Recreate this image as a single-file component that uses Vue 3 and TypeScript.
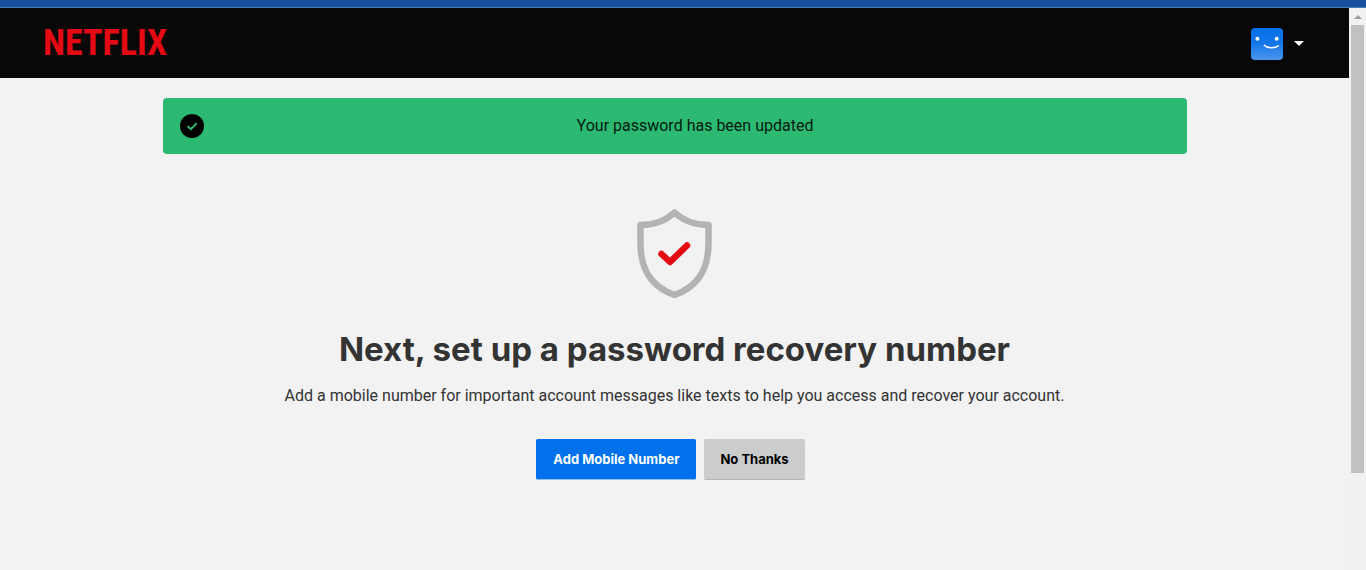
<script setup lang="ts">
import { ref } from 'vue'

const visible = ref(true)
const status: string = 'Your password has been updated'
</script>

<template>
  <div class="window">
    <div class="browser-edge"></div>
    <div class="viewport">
      <div class="page">
        <header class="header">
          <a class="logo" href="#" aria-label="Netflix">NETFLIX</a>
          <button class="account" type="button" aria-label="Account menu">
            <svg class="avatar" viewBox="0 0 32 32" aria-hidden="true">
              <defs>
                <linearGradient id="avatar-fill" x1="0" y1="0" x2="0" y2="1">
                  <stop offset="0" stop-color="#0670e8" />
                  <stop offset="0.45" stop-color="#1275e8" />
                  <stop offset="1" stop-color="#4b96ef" />
                </linearGradient>
              </defs>
              <rect width="32" height="32" rx="4" fill="url(#avatar-fill)" />
              <circle cx="6.4" cy="10.7" r="2" fill="#fff" />
              <circle cx="25.7" cy="10.7" r="2" fill="#fff" />
              <path d="M13.4 17.3C16 20.3 24.500 20.500 27.300 17.700" fill="none" stroke="#fff" stroke-width="1.500" stroke-linecap="round" />
            </svg>
            <svg class="caret" viewBox="0 0 10 6" aria-hidden="true"><path d="M0 0H10L5 5Z" fill="#fff" /></svg>
          </button>
        </header>

        <main class="main">
          <div v-if="visible" class="alert" role="status">
            <svg class="alert-icon" viewBox="0 0 24 24" aria-hidden="true">
              <circle cx="12" cy="12" r="12" fill="#000" />
              <path d="M7.700 12.200L10.900 15.200L16.600 9.300" fill="none" stroke="#2cb972" stroke-width="2" />
            </svg>
            <p class="alert-text">{{ status }}</p>
          </div>

          <section class="recovery">
            <svg class="shield" viewBox="0 0 76 90" aria-hidden="true">
              <path d="M37.500 3.500C29 11.500 17.500 16 3.500 16V34C3.500 60 13.500 77.500 37.500 86C61.500 77.500 71.500 60 71.500 34V16C57.500 16 46 11.500 37.500 3.500Z" fill="none" stroke="#b3b3b3" stroke-width="6.500" stroke-linejoin="round" />
              <path d="M24.500 45L33 53L50 36.500" fill="none" stroke="#e50914" stroke-width="6.500" stroke-linecap="round" stroke-linejoin="round" />
            </svg>
            <h1 class="title">Next, set up a password recovery number</h1>
            <p class="lead">Add a mobile number for important account messages like texts to help you access and recover your account.</p>
            <div class="actions">
              <button class="btn primary" type="button">Add Mobile Number</button>
              <button class="btn secondary" type="button" @click="visible = false">No Thanks</button>
            </div>
          </section>
        </main>
      </div>
      <div class="scrollbar" aria-hidden="true">
        <svg class="scroll-arrow" viewBox="0 0 17 17"><path d="M5 11L9 7L13 11Z" fill="#a0a0a0" /></svg>
        <div class="thumb"></div>
      </div>
    </div>
  </div>
</template>

<style>
body { margin: 0; background: #f2f2f2; }
</style>

<style scoped>
.window {
  display: flex;
  flex-direction: column;
  min-height: 100vh;
  background: #f2f2f2;
  color: #333;
  font-family: Inter, "Liberation Sans", sans-serif;
}
.browser-edge {
  box-sizing: border-box;
  height: 8px;
  background: #174f9c;
  border-bottom: 1px solid #4778b4;
}
.viewport { display: flex; flex: 1; }
.page { flex: 1; min-width: 0; }
.header {
  display: flex;
  align-items: center;
  justify-content: space-between;
  height: 70px;
  padding: 0 45px 0 43px;
  background: #080808;
}
.logo {
  color: #e50914;
  font-family: "Liberation Sans Narrow", "Roboto Condensed", "Liberation Sans", sans-serif;
  font-size: 36px;
  font-weight: 700;
  line-height: 40px;
  text-decoration: none;
}
.account {
  display: flex;
  align-items: center;
  gap: 11px;
  padding: 2px 0 0;
  border: 0;
  background: none;
}
.avatar { width: 32px; height: 32px; }
.caret { width: 10px; height: 6px; }
.main { max-width: 1024px; margin: 0 auto; padding: 20px 16px; }
.alert {
  display: flex;
  align-items: center;
  padding: 16px 0 16px 17px;
  border-radius: 4px;
  background: #2cb972;
}
.alert-icon { width: 24px; height: 24px; }
.alert-text {
  flex: 1;
  margin: 0;
  color: #061a10;
  font-family: Roboto, "Liberation Sans", sans-serif;
  font-size: 16px;
  line-height: 24px;
  text-align: center;
}
.recovery { display: flex; flex-direction: column; align-items: center; padding-top: 55px; }
.shield { width: 76px; height: 90px; }
.title {
  margin: 27px 0 0;
  font-size: 33px;
  line-height: 46px;
  font-weight: 700;
  text-align: center;
}
.lead {
  margin: 12px 0 0;
  font-family: Roboto, "Liberation Sans", sans-serif;
  font-size: 16px;
  line-height: 24px;
  text-align: center;
}
.actions { display: flex; gap: 8px; margin: 31px 8px 0 0; }
.btn {
  height: 41px;
  padding: 0 16px;
  border: 0;
  border-radius: 2px;
  font-family: inherit;
  font-size: 13px;
  font-weight: 700;
  line-height: 20px;
}
.primary { padding: 0 17px; background: #0071eb; color: #fff; border-bottom: 1px solid #8fbdec; }
.secondary { background: #ccc; color: #000; border-bottom: 1px solid #b5b5b5; }
.scrollbar { display: flex; flex-direction: column; width: 17px; background: #f1f1f1; }
.scroll-arrow { width: 17px; height: 17px; }
.thumb { width: 13px; height: 448px; margin-left: 2px; background: #c1c1c1; }
</style>
